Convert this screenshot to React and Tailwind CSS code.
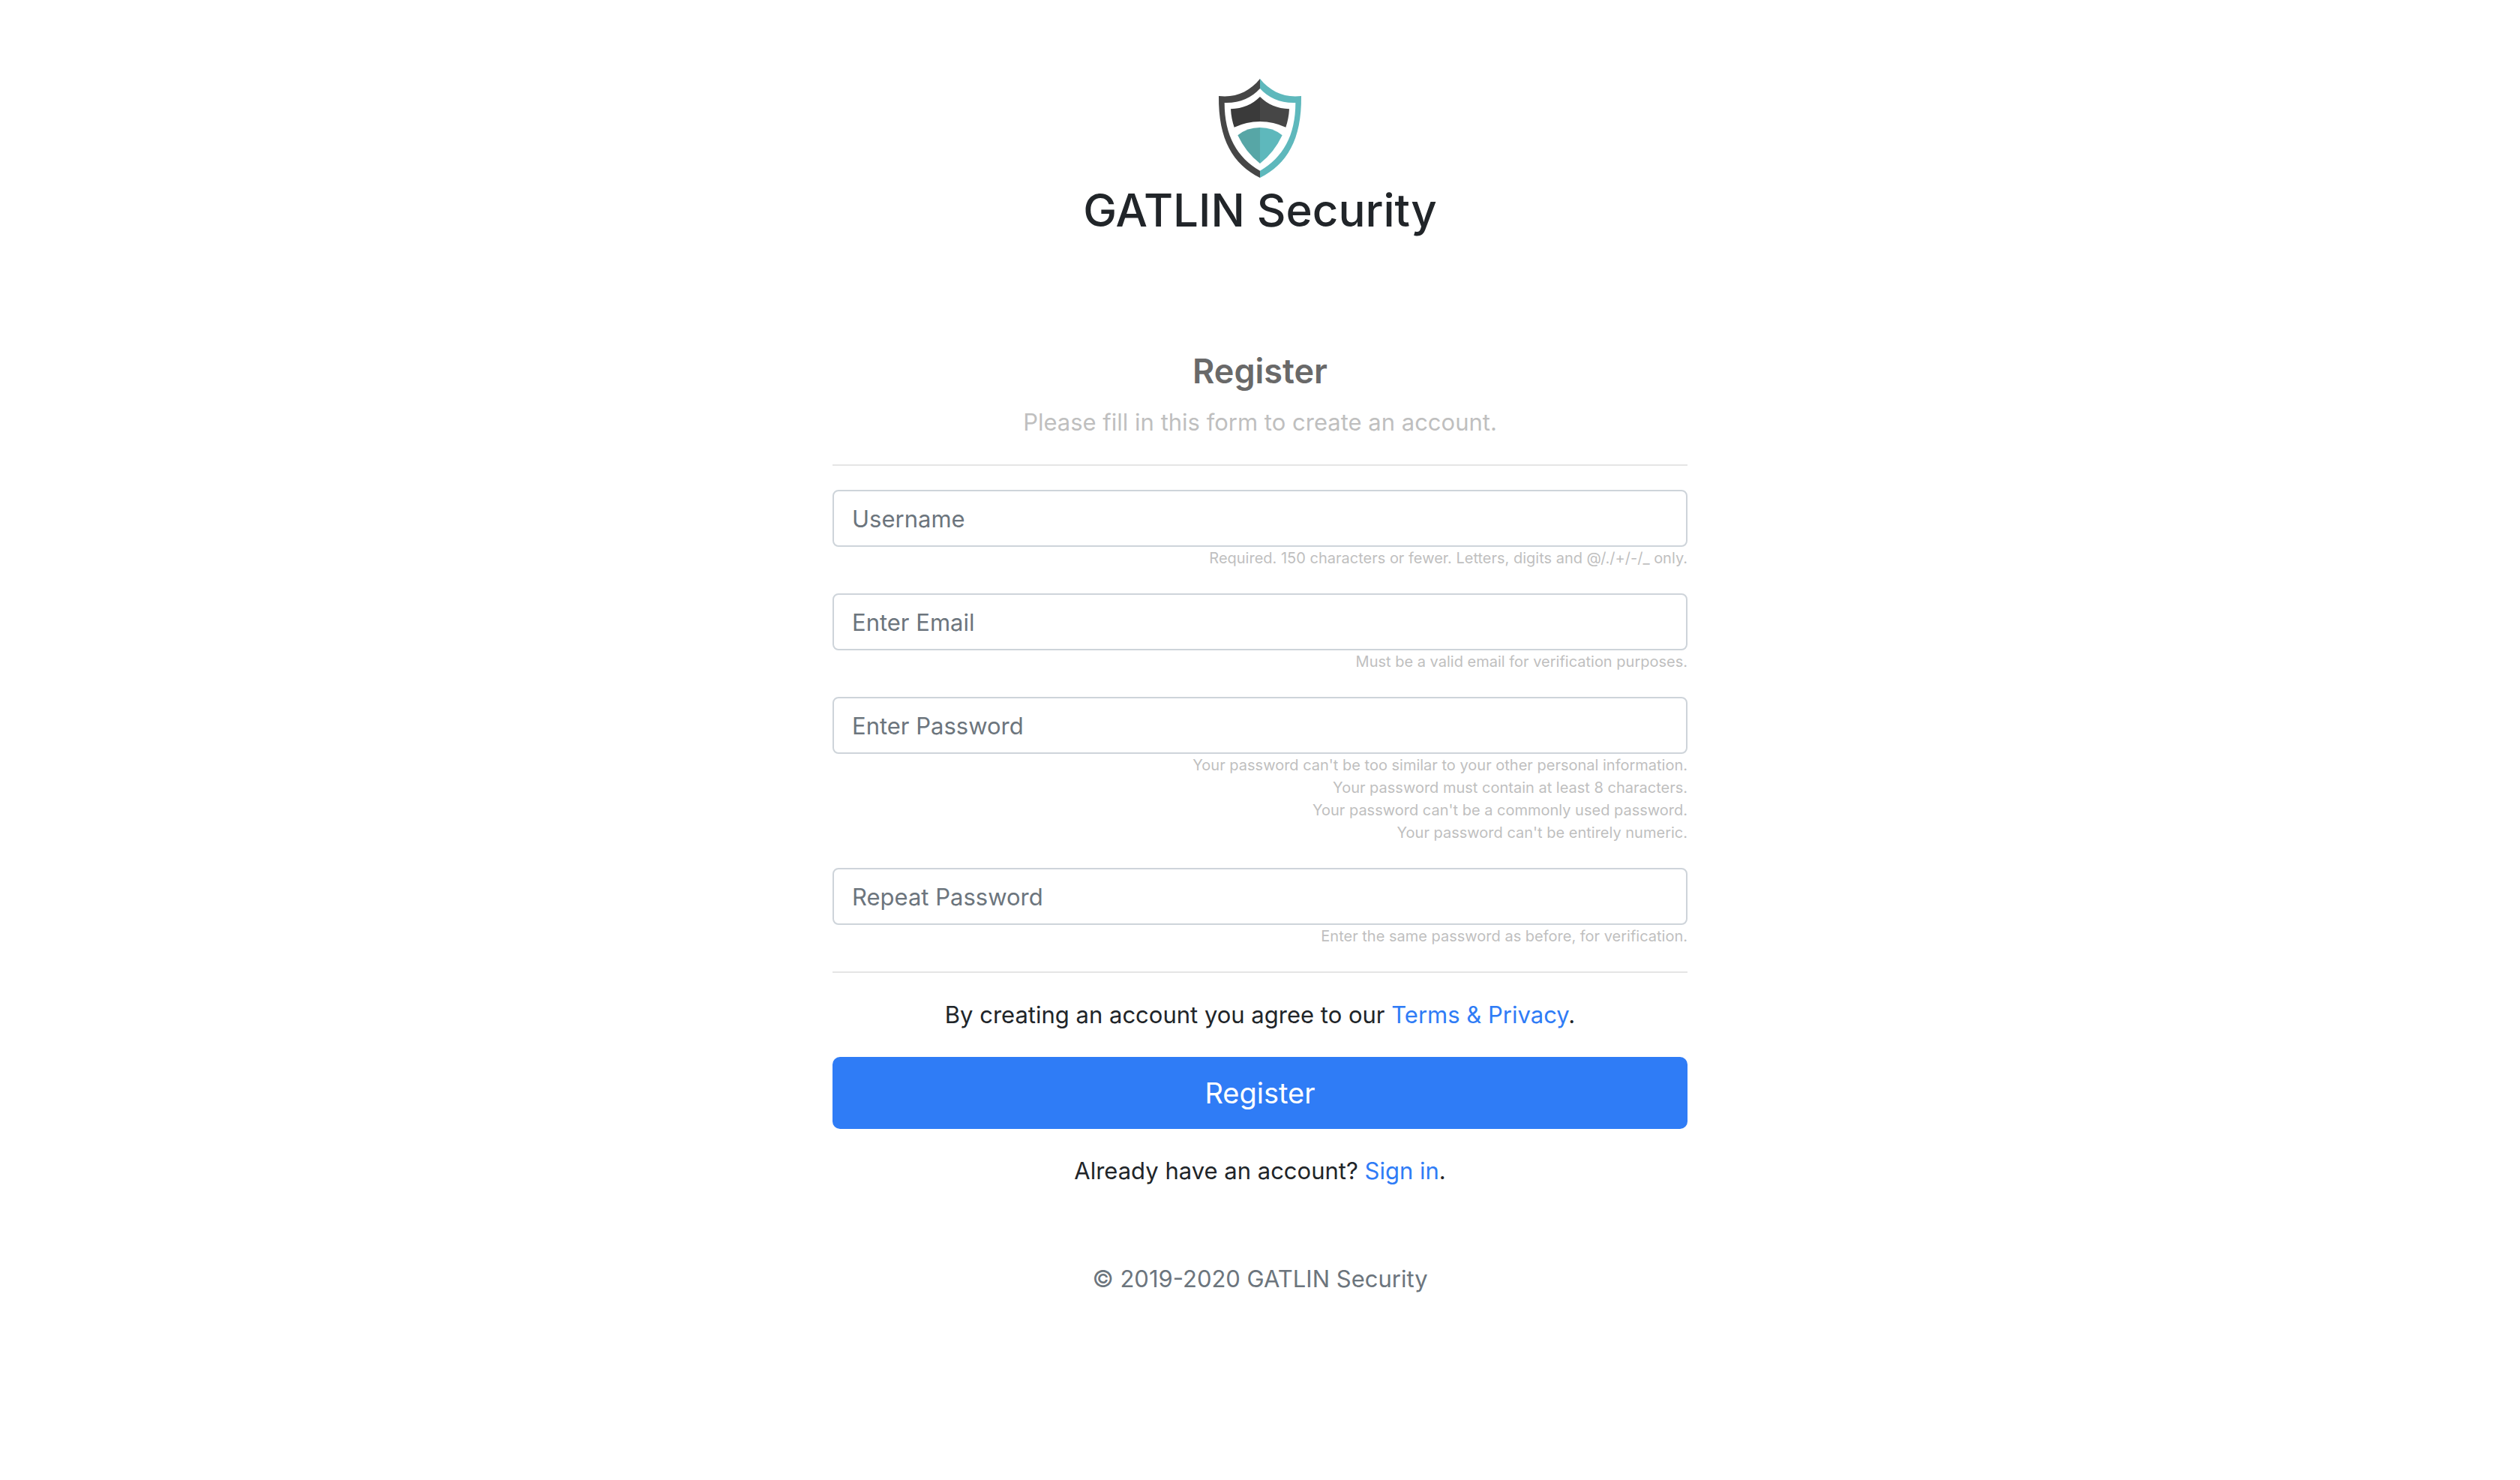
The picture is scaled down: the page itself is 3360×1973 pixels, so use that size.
import React from "react";

const fields = [
  {
    id: "username",
    type: "text",
    placeholder: "Username",
    hints: ["Required. 150 characters or fewer. Letters, digits and @/./+/-/_ only."],
  },
  {
    id: "email",
    type: "email",
    placeholder: "Enter Email",
    hints: ["Must be a valid email for verification purposes."],
  },
  {
    id: "password",
    type: "password",
    placeholder: "Enter Password",
    hints: [
      "Your password can't be too similar to your other personal information.",
      "Your password must contain at least 8 characters.",
      "Your password can't be a commonly used password.",
      "Your password can't be entirely numeric.",
    ],
  },
  {
    id: "password-repeat",
    type: "password",
    placeholder: "Repeat Password",
    hints: ["Enter the same password as before, for verification."],
  },
];

function ShieldLogo() {
  return (
    <svg className="h-[146px] w-40" viewBox="0 18 480 438" aria-hidden="true">
      <path
        fill="#464646"
        d="M240 45C198 97 142 122 75 114C73 290 132 386 240 441V413C148 360 98 272 98 141C158 143 206 122 240 84Z"
      />
      <path
        fill="#5eb8bc"
        d="M240 45C282 97 338 122 405 114C407 290 348 386 240 441V413C332 360 382 272 382 141C322 143 274 122 240 84Z"
      />
      <path fill="#3a3a3a" d="M240 117C210 147 171 164 123 166Q125 205 137 239Q185 217 240 216Z" />
      <path fill="#464646" d="M240 117C270 147 309 164 357 166Q355 205 343 239Q295 217 240 216Z" />
      <path fill="#57a6a6" d="M240 240Q188 240 151 271Q183 340 240 384Z" />
      <path fill="#5eb8bc" d="M240 240Q292 240 329 271Q297 340 240 384Z" />
    </svg>
  );
}

function Field({ id, type, placeholder, hints }) {
  return (
    <div>
      <input
        id={id}
        name={id}
        type={type}
        placeholder={placeholder}
        aria-label={placeholder}
        aria-describedby={`${id}-hint`}
        className="block h-[76px] w-full rounded-lg border-2 border-[#ced4da] bg-white px-6 text-[31px] text-[#495057] placeholder:text-[#6c757d] placeholder:opacity-100"
      />
      <div id={`${id}-hint`} className="text-right text-[20px] leading-[30px] text-[#bfbfbf]">
        {hints.map((hint) => (
          <p key={hint}>{hint}</p>
        ))}
      </div>
    </div>
  );
}

export default function App() {
  return (
    <div className="min-h-screen bg-white px-8 py-24 font-['Inter',sans-serif] text-[31px] leading-[48px] text-[#212529]">
      <div className="mx-auto w-full max-w-[1140px] text-center">
        <header className="flex flex-col items-center">
          <ShieldLogo />
          <h1 className="text-[60px] leading-[77px] font-medium">GATLIN Security</h1>
        </header>
        <main className="mt-[147px]">
          <form onSubmit={(event) => event.preventDefault()}>
            <h2 className="text-[45px] leading-[58px] font-semibold text-[#696969]">Register</h2>
            <p className="mt-[15px] text-[#bfbfbf]">Please fill in this form to create an account.</p>
            <hr className="my-8 border-t-2 border-[#e5e5e5]" />
            <div className="flex flex-col gap-8">
              {fields.map((field) => (
                <Field key={field.id} {...field} />
              ))}
            </div>
            <hr className="my-8 border-t-2 border-[#e5e5e5]" />
            <p>
              By creating an account you agree to our{" "}
              <a href="#terms" className="text-[#2f7cf6]">
                Terms &amp; Privacy
              </a>
              .
            </p>
            <button
              type="submit"
              className="my-8 block h-24 w-full rounded-[10px] bg-[#2f7cf6] text-[38px] text-white"
            >
              Register
            </button>
          </form>
          <p>
            Already have an account?{" "}
            <a href="#signin" className="text-[#2f7cf6]">
              Sign in
            </a>
            .
          </p>
        </main>
        <footer className="mt-24 text-[#6c757d]">© 2019-2020 GATLIN Security</footer>
      </div>
    </div>
  );
}
